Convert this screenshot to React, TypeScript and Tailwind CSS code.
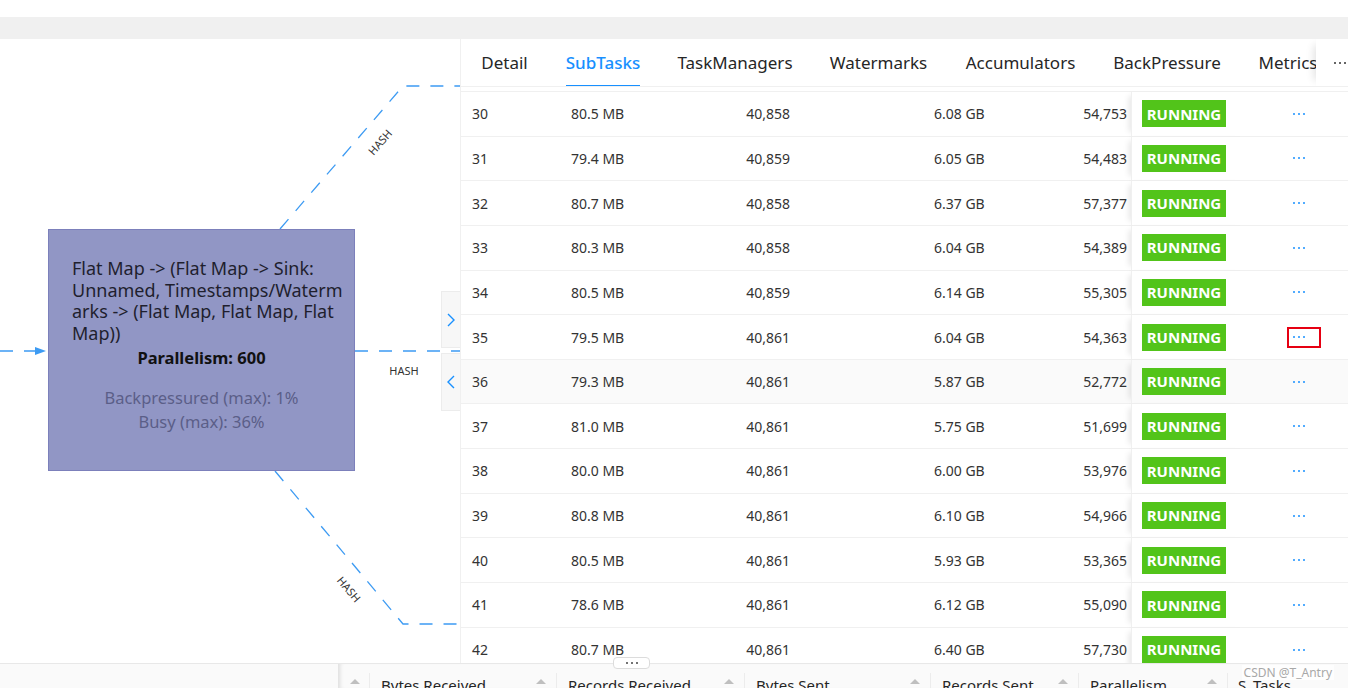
import React from 'react';

// Subtask rows shown in the scrolled table
const rows: string[][] = [
  ['30', '80.5 MB', '40,858', '6.08 GB', '54,753'],
  ['31', '79.4 MB', '40,859', '6.05 GB', '54,483'],
  ['32', '80.7 MB', '40,858', '6.37 GB', '57,377'],
  ['33', '80.3 MB', '40,858', '6.04 GB', '54,389'],
  ['34', '80.5 MB', '40,859', '6.14 GB', '55,305'],
  ['35', '79.5 MB', '40,861', '6.04 GB', '54,363'],
  ['36', '79.3 MB', '40,861', '5.87 GB', '52,772'],
  ['37', '81.0 MB', '40,861', '5.75 GB', '51,699'],
  ['38', '80.0 MB', '40,861', '6.00 GB', '53,976'],
  ['39', '80.8 MB', '40,861', '6.10 GB', '54,966'],
  ['40', '80.5 MB', '40,861', '5.93 GB', '53,365'],
  ['41', '78.6 MB', '40,861', '6.12 GB', '55,090'],
  ['42', '80.7 MB', '40,861', '6.40 GB', '57,730'],
];

const tabs = [
  { label: 'Detail', w: 'w-[45px]' },
  { label: 'SubTasks', w: 'w-[72px]', active: true },
  { label: 'TaskManagers', w: 'w-[112px]' },
  { label: 'Watermarks', w: 'w-[95px]' },
  { label: 'Accumulators', w: 'w-[109px]' },
  { label: 'BackPressure', w: 'w-[104px]' },
  { label: 'Metrics', w: 'w-[58px]' },
];

const headers = [
  { label: '', w: 'w-[31px]' },
  { label: 'Bytes Received', w: 'w-[187px]' },
  { label: 'Records Received', w: 'w-[188px]' },
  { label: 'Bytes Sent', w: 'w-[186px]' },
  { label: 'Records Sent', w: 'w-[148px]' },
  { label: 'Parallelism', w: 'w-[149px]' },
];

const EDGE = '#3d9bf3';

const Dots: React.FC<{ color: string }> = ({ color }) => (
  <span className="flex items-center gap-[3px]">
    <span className={`h-[2px] w-[2px] rounded-full ${color}`} />
    <span className={`h-[2px] w-[2px] rounded-full ${color}`} />
    <span className={`h-[2px] w-[2px] rounded-full ${color}`} />
  </span>
);

const SortUp = () => (
  <span className="h-0 w-0 border-x-[5px] border-b-[5px] border-x-transparent border-b-[#bfbfbf]" />
);

const GraphCanvas: React.FC = () => (
  <div className="relative w-[460px] shrink-0 overflow-hidden bg-white">
    {/* edges */}
    <svg className="absolute left-0 top-0" width="460" height="624" viewBox="0 0 460 624">
      <g fill="none" stroke={EDGE} strokeWidth="1.3" strokeDasharray="13 11">
        <line x1="0" y1="312" x2="36" y2="312" />
        <line x1="355" y1="312" x2="460" y2="312" />
        <polyline points="280,190 403,47 460,47" />
        <polyline points="275,432 403,585 460,585" />
      </g>
      <polygon points="35,308 46,312 35,316" fill={EDGE} />
      <g fontFamily="'Noto Sans', 'Open Sans', sans-serif" fontSize="11" fill="#333">
        <text x="381" y="104" textAnchor="middle" dominantBaseline="middle" transform="rotate(-49 381 104)">HASH</text>
        <text x="348" y="551" textAnchor="middle" dominantBaseline="middle" transform="rotate(50 348 551)">HASH</text>
        <text x="404" y="333" textAnchor="middle" dominantBaseline="middle">HASH</text>
      </g>
    </svg>

    {/* operator node */}
    <div className="absolute left-[48px] top-[190px] h-[242px] w-[307px] border border-[#7c80bb] bg-[#9196c5] pt-[28px]">
      <div className="whitespace-nowrap pl-[23px] text-[18px] leading-[21.5px] text-[#1f1f2e]">
        Flat Map -&gt; (Flat Map -&gt; Sink:
        <br />
        Unnamed, Timestamps/Waterm
        <br />
        arks -&gt; (Flat Map, Flat Map, Flat
        <br />
        Map))
      </div>
      <div className="mt-[3px] text-center text-[16.5px] font-bold leading-[22px] text-[#111]">Parallelism: 600</div>
      <div className="mt-[17px] text-center text-[16.5px] leading-[24px] text-[#5b5e88]">
        <div>Backpressured (max): 1%</div>
        <div>Busy (max): 36%</div>
      </div>
    </div>

    {/* collapse toggles */}
    <div className="absolute left-[441px] top-[252px] flex h-[57px] w-[19px] items-center justify-center border border-r-0 border-[#ececec] bg-[#f7f7f7]">
      <svg width="8" height="14" viewBox="0 0 8 14">
        <polyline points="1,1 7,7 1,13" fill="none" stroke="#1890ff" strokeWidth="1.4" />
      </svg>
    </div>
    <div className="absolute left-[441px] top-[314px] flex h-[58px] w-[19px] items-center justify-center border border-r-0 border-[#ececec] bg-[#f7f7f7]">
      <svg width="8" height="14" viewBox="0 0 8 14">
        <polyline points="7,1 1,7 7,13" fill="none" stroke="#1890ff" strokeWidth="1.4" />
      </svg>
    </div>
  </div>
);

const SubTaskPanel: React.FC = () => (
  <div className="flex min-w-0 flex-1 flex-col border-l border-[#f0f0f0] bg-white">
    {/* tabs */}
    <div className="relative flex h-[48px] shrink-0 items-center gap-10 overflow-hidden border-b border-[#f0f0f0] pl-[21px]">
      {tabs.map((t) => (
        <div
          key={t.label}
          className={`relative flex h-full shrink-0 items-center justify-center whitespace-nowrap text-[17px] ${t.w} ${
            t.active ? 'font-medium text-[#1890ff]' : 'text-[#262626]'
          }`}
        >
          {t.label}
          {t.active && <span className="absolute -bottom-px left-[-1px] right-[-1px] h-[2px] bg-[#1890ff]" />}
        </div>
      ))}
      <div className="absolute right-0 top-0 flex h-[47px] w-[32px] items-center justify-end bg-white pr-[2px] shadow-[-8px_0_8px_-6px_rgba(0,0,0,0.12)]">
        <Dots color="bg-[#333]" />
      </div>
    </div>

    {/* rows */}
    <div className="mt-[4px] flex-1 overflow-hidden text-[14px] text-[#333]">
      {rows.map((r) => {
        const hover = r[0] === '36';
        const marked = r[0] === '35';
        return (
          <div
            key={r[0]}
            className={`flex h-[44.65px] items-center border-t border-[#f0f0f0] ${hover ? 'bg-[#fafafa]' : 'bg-white'}`}
          >
            <div className="w-[98px] shrink-0 pl-[11px]">{r[0]}</div>
            <div className="w-[121px] shrink-0 pl-3">{r[1]}</div>
            <div className="w-[182px] shrink-0 pr-[72px] text-right">{r[2]}</div>
            <div className="w-[140px] shrink-0 pl-[72px]">{r[3]}</div>
            <div className="w-[129px] shrink-0 pr-1 text-right">{r[4]}</div>
            <div
              className={`flex h-full w-[119px] shrink-0 items-center border-l border-[#f0f0f0] pl-[10px] shadow-[-6px_0_6px_-4px_rgba(0,0,0,0.10)] ${
                hover ? 'bg-[#fafafa]' : 'bg-white'
              }`}
            >
              <span className="flex h-[27px] w-[84px] items-center justify-center bg-[#52c41a] text-[15px] font-bold text-white">
                RUNNING
              </span>
            </div>
            <div className={`flex h-full flex-1 items-center pl-[37px] ${hover ? 'bg-[#fafafa]' : 'bg-white'}`}>
              <span
                className={`flex h-[21px] w-[34px] items-center border-2 pl-[4px] ${
                  marked ? 'border-[#e60012]' : 'border-transparent'
                }`}
              >
                <Dots color="bg-[#1890ff]" />
              </span>
            </div>
          </div>
        );
      })}
    </div>
  </div>
);

const BottomBar: React.FC = () => (
  <div className="relative flex h-[25px] shrink-0 border-t border-[#e8e8e8] bg-[#fafafa]">
    <div className="w-[338px] shrink-0" />
    <div className="flex h-full shrink-0 border-l border-[#e4e4e4] shadow-[inset_4px_0_4px_-3px_rgba(0,0,0,0.12)]">
      {headers.map((h, i) => (
        <div key={i} className={`mt-[9px] flex h-full shrink-0 justify-between border-r border-[#ececec] pr-[10px] ${h.w}`}>
          <span className="whitespace-nowrap pl-[11px] pt-[2px] text-[15px] leading-[20px] text-[#262626]">{h.label}</span>
          <span className="mt-[6px] flex">
            <SortUp />
          </span>
        </div>
      ))}
      <div className="mt-[9px] pl-[10px] pt-[2px] text-[15px] leading-[20px] text-[#262626]">S_Tasks</div>
    </div>

    {/* split handle */}
    <div className="absolute left-[613px] top-[-7px] flex h-[12px] w-[37px] items-center justify-center rounded-sm border border-[#dcdcdc] bg-white">
      <Dots color="bg-[#444]" />
    </div>

    {/* watermark */}
    <div className="absolute right-[14px] top-px bg-white/70 px-[2px] text-[12px] leading-[15px] text-[#a8a8a8]">CSDN @T_Antry</div>
  </div>
);

const App: React.FC = () => {
  return (
    <div className="flex h-[688px] w-[1348px] flex-col overflow-hidden bg-white font-['Noto_Sans','Open_Sans',sans-serif]">
      <div className="h-[17px] shrink-0 bg-white" />
      <div className="h-[22px] shrink-0 bg-[#f0f0f0]" />
      <div className="flex h-[624px] shrink-0">
        <GraphCanvas />
        <SubTaskPanel />
      </div>
      <BottomBar />
    </div>
  );
};

export default App;
